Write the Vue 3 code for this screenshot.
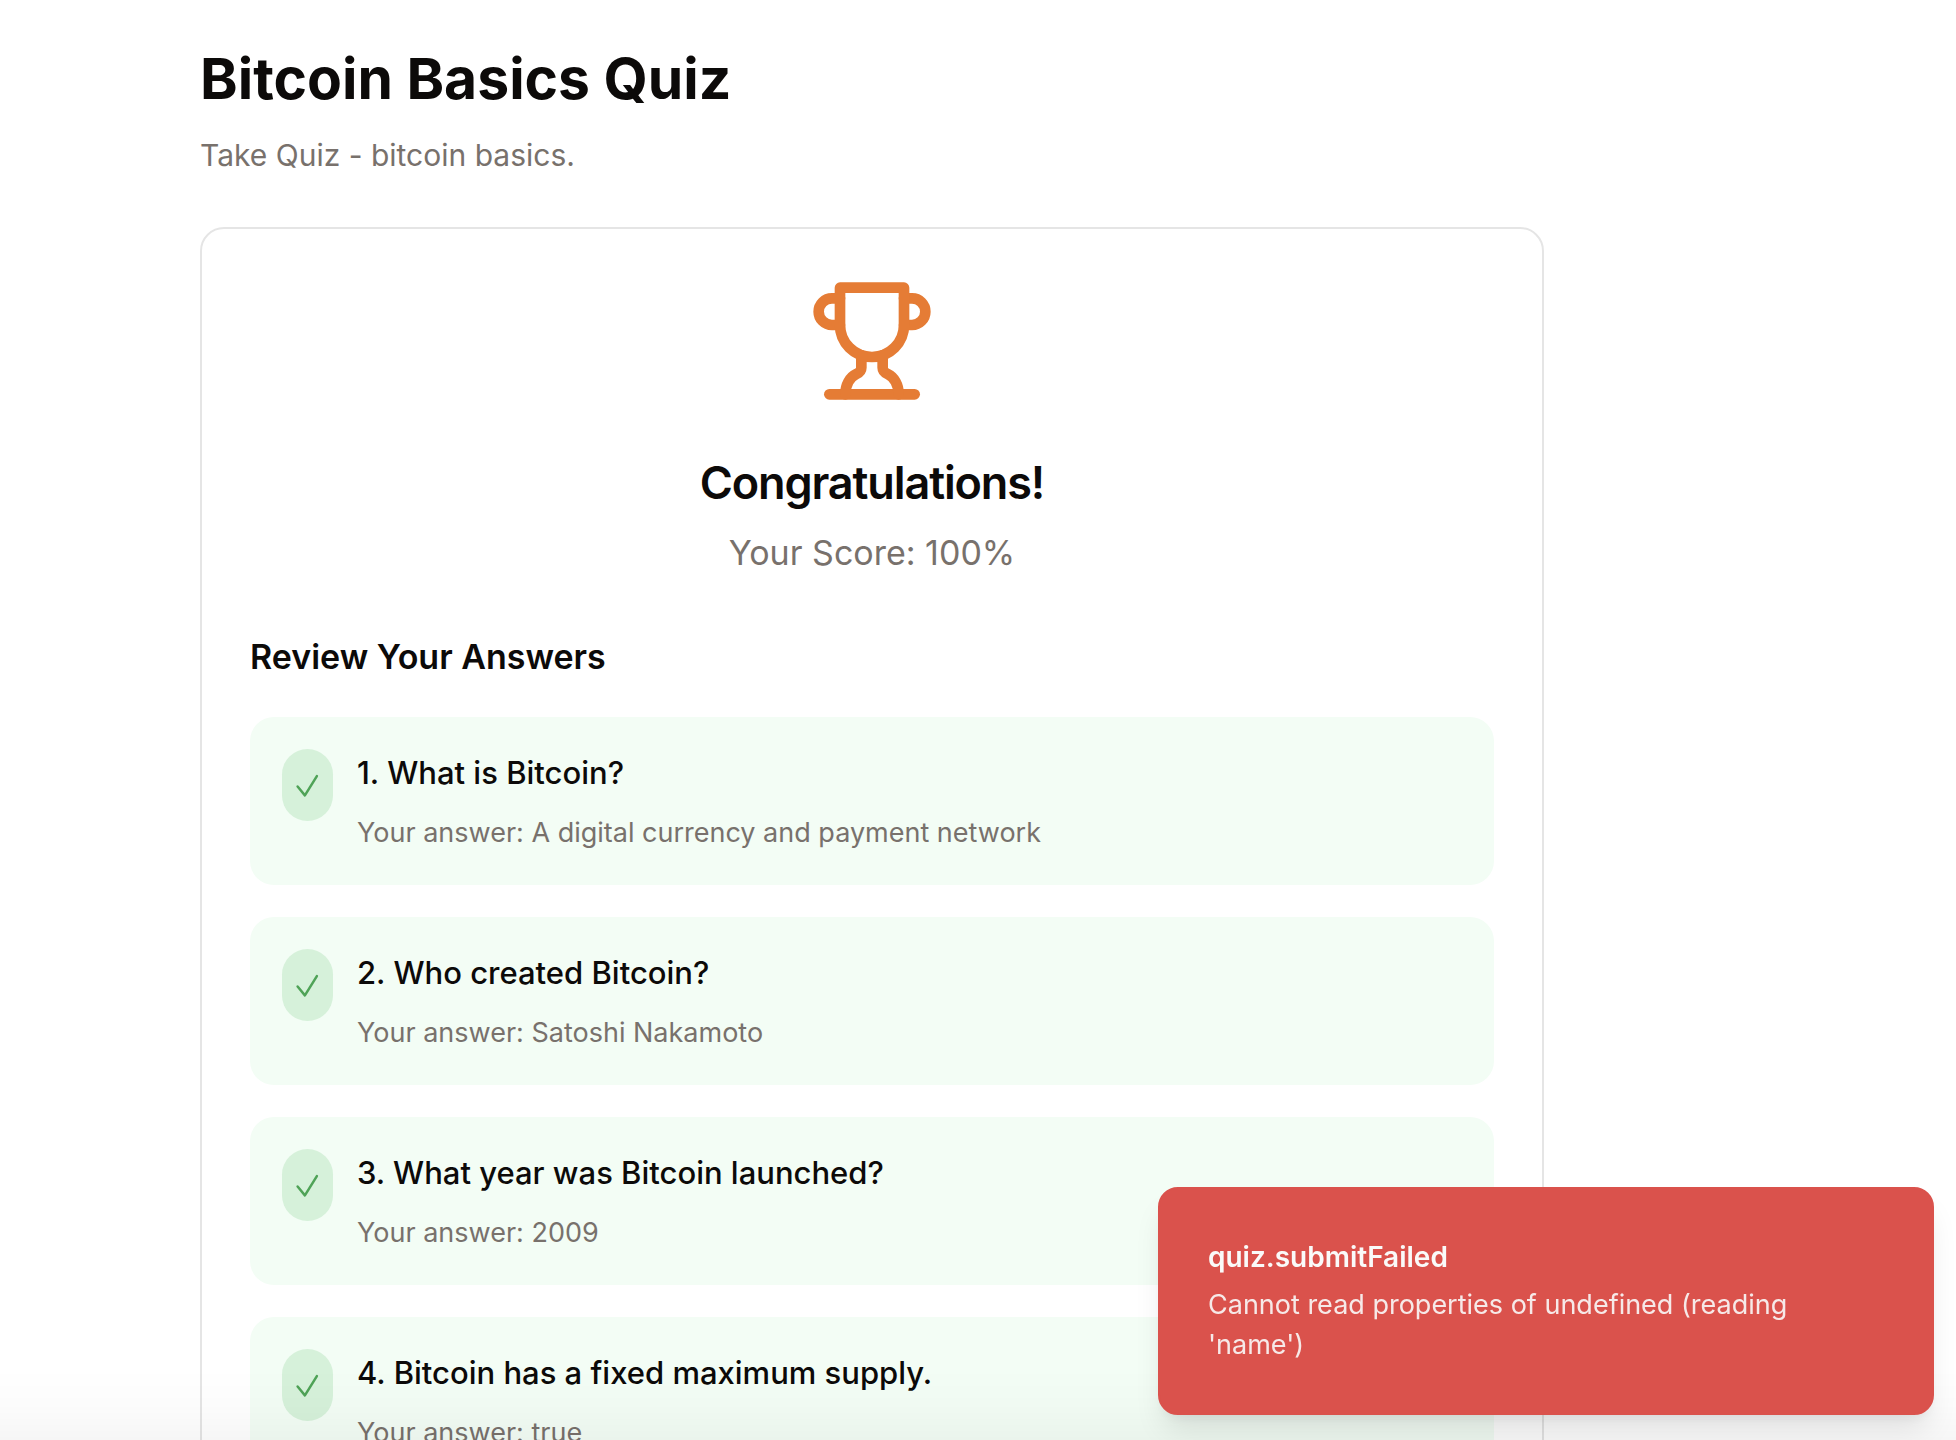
<script setup>
const answers = [
  { question: 'What is Bitcoin?', answer: 'A digital currency and payment network' },
  { question: 'Who created Bitcoin?', answer: 'Satoshi Nakamoto' },
  { question: 'What year was Bitcoin launched?', answer: '2009' },
  { question: 'Bitcoin has a fixed maximum supply.', answer: 'true' },
]
</script>

<template>
  <div class="page">
    <main class="content">
      <header class="intro">
        <h1>Bitcoin Basics Quiz</h1>
        <p>Take Quiz - bitcoin basics.</p>
      </header>

      <section class="card">
        <div class="result">
          <svg class="trophy" viewBox="0 0 24 24" fill="none" stroke="currentColor" stroke-width="2" stroke-linecap="round" stroke-linejoin="round" aria-hidden="true">
            <path d="M6 9H4.5a2.5 2.5 0 0 1 0-5H6" />
            <path d="M18 9h1.5a2.5 2.5 0 0 0 0-5H18" />
            <path d="M4 22h16" />
            <path d="M10 14.66V17c0 .55-.47.98-.97 1.21C7.85 18.75 7 20.24 7 22" />
            <path d="M14 14.66V17c0 .55.47.98.97 1.21C16.15 18.75 17 20.24 17 22" />
            <path d="M18 2H6v7a6 6 0 0 0 12 0V2Z" />
          </svg>
          <h2>Congratulations!</h2>
          <p>Your Score: 100%</p>
        </div>

        <h3>Review Your Answers</h3>
        <ol class="answers">
          <li v-for="(item, index) in answers" :key="item.question" class="answer">
            <span class="badge">
              <svg viewBox="0 0 24 24" fill="none" stroke="currentColor" stroke-width="2.4" stroke-linecap="round" stroke-linejoin="round" aria-hidden="true">
                <path d="M2.5 13L9.5 21.5L21 3" />
              </svg>
            </span>
            <div>
              <h4>{{ index + 1 }}. {{ item.question }}</h4>
              <p>Your answer: {{ item.answer }}</p>
            </div>
          </li>
        </ol>
      </section>
    </main>

    <div class="fade"></div>

    <div class="toast" role="alert">
      <strong>quiz.submitFailed</strong>
      <p>Cannot read properties of undefined (reading 'name')</p>
    </div>
  </div>
</template>

<style>
body {
  margin: 0;
  background: #fff;
}
</style>

<style scoped>
.page {
  height: 100vh;
  overflow: hidden;
  color: #0c0a09;
  font-family: Inter, "Liberation Sans", sans-serif;
  font-size: 30px;
  line-height: 48px;
}

h1,
h2,
h3,
h4,
p,
ol {
  margin: 0;
  padding: 0;
}

p {
  color: #78716c;
}

.content {
  max-width: 1344px;
  margin-left: 200px;
  padding-top: 43px;
}

.intro {
  display: flex;
  flex-direction: column;
  gap: 16px;
  margin-bottom: 48px;
}

h1 {
  font-size: 57px;
  font-weight: 700;
  line-height: 72px;
}

.card {
  padding: 48px;
  border: 2px solid #e5e5e5;
  border-radius: 24px;
}

.result {
  display: flex;
  flex-direction: column;
  align-items: center;
  margin-bottom: 48px;
}

.trophy {
  width: 128px;
  height: 128px;
  margin-bottom: 46px;
  color: #e57c35;
}

h2 {
  margin-bottom: 10px;
  font-size: 45px;
  font-weight: 600;
  line-height: 64px;
  letter-spacing: -0.025em;
}

.result p,
h3 {
  font-size: 34px;
  line-height: 56px;
}

h3 {
  margin-bottom: 32px;
  font-weight: 600;
}

.answers {
  display: flex;
  flex-direction: column;
  gap: 32px;
  list-style: none;
}

.answer {
  display: flex;
  align-items: flex-start;
  gap: 24px;
  padding: 32px;
  border-radius: 24px;
  background: #f3fdf5;
}

.badge {
  display: flex;
  align-items: center;
  justify-content: center;
  width: 51px;
  height: 72px;
  border-radius: 26px;
  background: #d6f1da;
  color: #4fa357;
}

.badge svg {
  width: 25px;
  height: 25px;
}

h4 {
  margin-bottom: 16px;
  font-size: 31px;
  font-weight: 500;
}

.answer p,
.toast p {
  font-size: 27px;
  line-height: 40px;
}

.fade {
  position: fixed;
  inset: auto 0 0;
  height: 72px;
  background: linear-gradient(to bottom, rgba(0, 0, 0, 0), rgba(0, 0, 0, 0.012) 50%, rgba(0, 0, 0, 0.035));
  pointer-events: none;
}

.toast {
  position: fixed;
  right: 22px;
  bottom: 25px;
  display: flex;
  flex-direction: column;
  gap: 8px;
  box-sizing: border-box;
  width: 776px;
  padding: 48px 96px 48px 48px;
  border: 2px solid #da524c;
  border-radius: 20px;
  background: #da524c;
  box-shadow: 0 20px 30px -6px rgba(0, 0, 0, 0.1), 0 8px 12px -4px rgba(0, 0, 0, 0.05);
  color: #fafaf9;
}

.toast strong {
  font-size: 28px;
  font-weight: 600;
  line-height: 40px;
}

.toast p {
  color: #fafaf9;
  opacity: 0.9;
}
</style>
